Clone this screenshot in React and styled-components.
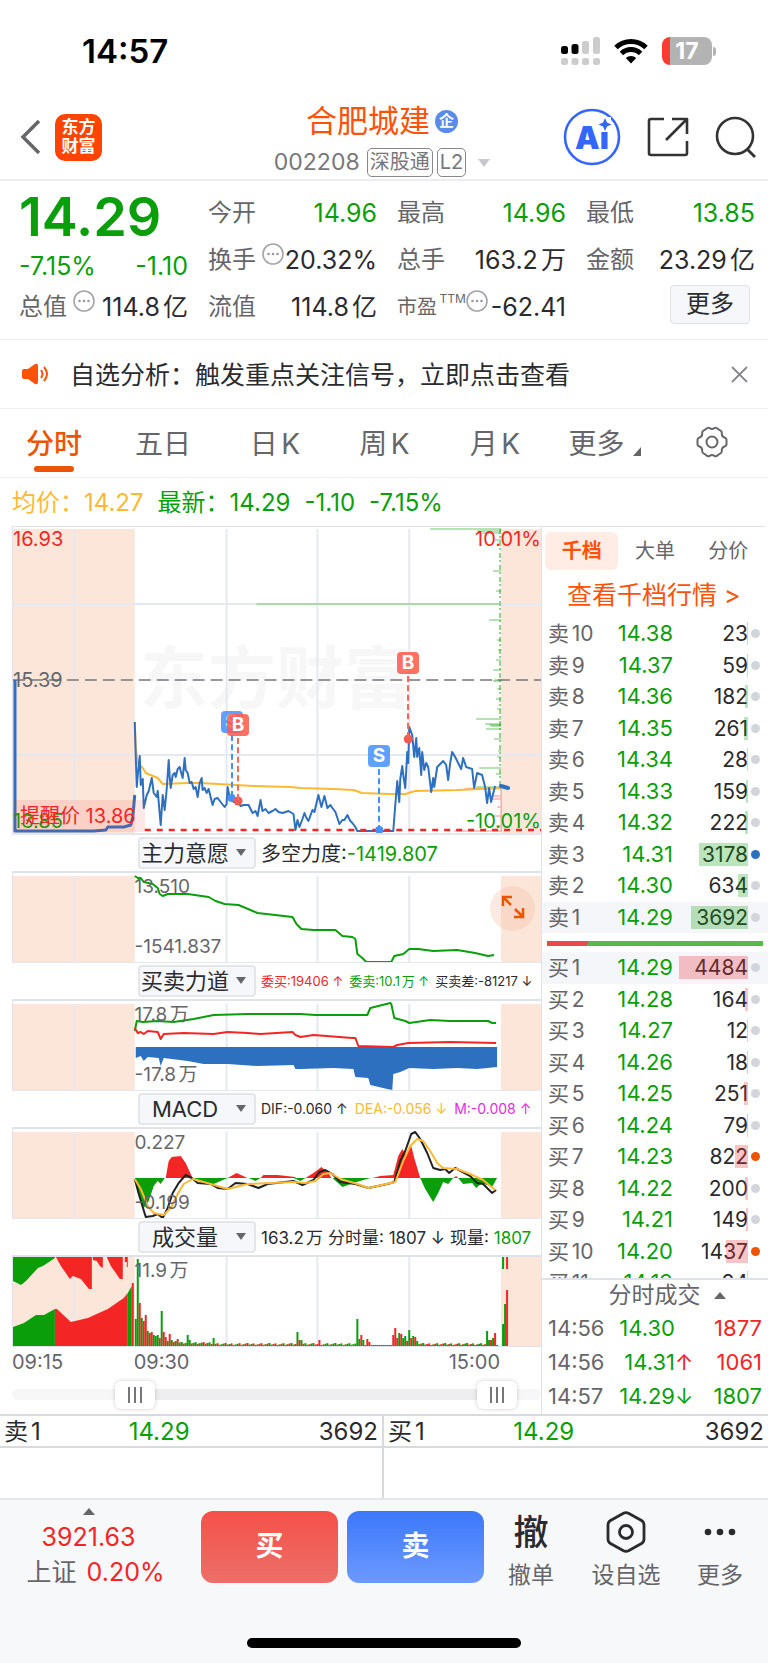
import React from 'react';
import {useState} from 'react';
import styled, {createGlobalStyle, css} from 'styled-components';

const GREEN = '#0a9f0a';
const RED = '#f42525';
const BLUE = '#2e70c0';
const GOLD = '#fdb933';
const ORANGE = '#ff5208';

const GlobalStyle = createGlobalStyle`
    * {
        box-sizing: border-box;
    }
    body {
        margin: 0;
        background: #fff;
        color: #2b2b2f;
        font-family: Inter, "Noto Sans CJK SC", sans-serif;
        text-autospace: normal;
    }
    button, select, input {
        font-family: inherit;
        color: inherit;
        margin: 0;
        padding: 0;
        border: none;
        background: transparent;
    }
    button {
        cursor: pointer;
    }
`;

const colors = {green: GREEN, red: RED, gold: GOLD, gray: '#66666a', magenta: '#e52be5', dark: '#2b2b2f'};

const Tint = styled.span`
    color: ${p => colors[p.$color]};
`;

const StatusBar = styled.div`
    display: flex;
    align-items: center;
    justify-content: space-between;
    height: 102px;
    padding: 0 52px 0 82px;
    color: #000;
`;

const Clock = styled.div`
    font-size: 33px;
    font-weight: 600;
`;

const StatusIcons = styled.div`
    display: flex;
    align-items: center;
    gap: 14px;
`;

const Battery = styled.div`
    display: flex;
    align-items: center;
    justify-content: center;
    width: 50px;
    height: 28px;
    border-radius: 8px;
    background: linear-gradient(90deg, #ff3b30 8px, #b3b3b3 8px);
    color: #fff;
    font-size: 23px;
    font-weight: 700;
`;

const BatteryWrap = styled.div`
    display: flex;
    align-items: center;
    gap: 1px;
`;

const BatteryTip = styled.div`
    width: 3px;
    height: 9px;
    border-radius: 0 3px 3px 0;
    background: #b3b3b3;
`;

const Header = styled.header`
    display: grid;
    grid-template-columns: 1fr auto 1fr;
    align-items: center;
    height: 79px;
    padding: 0 11px 0 20px;
    border-bottom: 2px solid #ececee;
`;

const HeaderLeft = styled.div`
    display: flex;
    align-items: center;
    gap: 14px;
    padding-bottom: 10px;
`;

const HeaderRight = styled.div`
    display: flex;
    align-items: center;
    justify-content: flex-end;
    gap: 26px;
    padding-bottom: 10px;
`;

const IconButton = styled.button`
    display: flex;
    align-items: center;
`;

const Logo = styled.div`
    width: 47px;
    height: 47px;
    padding-top: 4px;
    border-radius: 10px;
    background: #ff4400;
    color: #fff;
    font-size: 17px;
    font-weight: 700;
    line-height: 19px;
    text-align: center;
`;

const TitleBlock = styled.div`
    display: flex;
    flex-direction: column;
    align-items: center;
    gap: 8px;
    padding: 0 13px 5px 0;
`;

const Title = styled.div`
    display: flex;
    align-items: center;
    gap: 5px;
    color: ${ORANGE};
    font-size: 31px;
    line-height: 38px;
`;

const CompanyBadge = styled.span`
    width: 23px;
    height: 23px;
    border-radius: 50%;
    background: #5b8bea;
    color: #fff;
    font-size: 15px;
    font-weight: 700;
    line-height: 22px;
    text-align: center;
`;

const CodeLine = styled.div`
    display: flex;
    align-items: center;
    gap: 4px;
    color: #77777b;
    font-size: 23px;
    line-height: 29px;
`;

const CodeNumber = styled.span`
    margin-right: 3px;
`;

const CodeTag = styled.span`
    padding: 0 2px;
    border: 1px solid #88888c;
    border-radius: 5px;
    font-size: 20px;
    line-height: 27px;
`;

const Triangle = styled.span`
    display: inline-block;
    border: ${p => p.$size || 6}px solid transparent;
    border-top: ${p => p.$up ? 0 : (p.$size || 6) + 2}px solid ${p => p.$color || '#66666a'};
    border-bottom: ${p => p.$up ? (p.$size || 6) + 1 : 0}px solid ${p => p.$color || '#66666a'};
`;

const CodeArrow = styled(Triangle)`
    margin-left: 8px;
`;

const Quote = styled.section`
    display: grid;
    grid-template-columns: repeat(4, minmax(0, 1fr));
    grid-template-rows: repeat(3, 47px);
    column-gap: 20px;
    height: 159px;
    padding: 8px 13px 0 19px;
    border-bottom: 1px solid #f0f0f2;
    font-size: 25px;
`;

const PriceCell = styled.div`
    grid-row: span 2;
    display: flex;
    flex-direction: column;
    color: ${GREEN};
`;

const BigPrice = styled.div`
    font-size: 54px;
    font-weight: 600;
    line-height: 55px;
`;

const ChangeLine = styled.div`
    display: flex;
    justify-content: space-between;
    line-height: 45px;
`;

const QuoteCell = styled.div`
    display: flex;
    align-items: center;
    white-space: nowrap;
    line-height: 30px;
`;

const QuoteLabel = styled.span`
    color: #66666a;
    font-size: ${p => p.$small ? 20 : 24}px;
    sup {
        font-size: 12px;
        line-height: 12px;
        vertical-align: 11px;
    }
`;

const QuoteValue = styled.span`
    margin-left: auto;
    color: ${p => p.$green ? GREEN : '#2b2b2f'};
`;

const InfoDots = styled.button`
    display: flex;
    align-self: flex-start;
    margin: 7px 0 0 ${p => p.$tight ? 0 : 6}px;
`;

const MoreButton = styled.button`
    align-self: center;
    justify-self: end;
    width: 80px;
    height: 39px;
    margin: 0 5px 4px 0;
    padding-bottom: 1px;
    border: 1px solid #dfe1e6;
    border-radius: 4px;
    background: #f5f7fa;
    font-size: 24px;
    line-height: 30px;
`;

const Notice = styled.section`
    display: flex;
    align-items: center;
    gap: 20px;
    height: 69px;
    padding: 0 20px 0 22px;
    border-bottom: 1px solid #f0f0f2;
    font-size: 25px;
`;

const NoticeText = styled.div`
    flex: 1;
    padding-bottom: 3px;
    white-space: nowrap;
`;

const Periods = styled.nav`
    display: grid;
    grid-template-columns: 108fr 110fr 114fr 105fr 116fr 103fr 112fr;
    height: 69px;
    border-bottom: 1px solid #f0f0f2;
`;

const Period = styled.button`
    position: relative;
    display: flex;
    align-items: center;
    justify-content: center;
    gap: 8px;
    padding-bottom: 3px;
    font-size: 28px;
    font-weight: ${p => p.$active ? 500 : 400};
    color: ${p => p.$active ? '#ec5404' : '#66666a'};
    ${p => p.$active && css`
        &::after {
            content: '';
            position: absolute;
            bottom: 5px;
            width: 40px;
            height: 6px;
            border-radius: 3px;
            background: #ec5404;
        }
    `}
`;

const Corner = styled.span`
    align-self: flex-end;
    margin-bottom: 18px;
    border-left: 8px solid transparent;
    border-bottom: 9px solid #66666a;
`;

const Legend = styled.div`
    display: flex;
    align-items: baseline;
    gap: 14px;
    height: 48px;
    padding-left: 12px;
    font-size: 24px;
    line-height: 49px;
    color: ${GREEN};
`;

const Main = styled.main`
    display: grid;
    grid-template-columns: minmax(0, 1fr) 227px;
    border-bottom: 2px solid #d8dae0;
`;

const Charts = styled.section`
    padding-left: 12px;
`;

const Plot = styled.div`
    position: relative;
    height: ${p => p.$height}px;
    border-left: 1px solid #dfe2ea;
    border-top: ${p => p.$thick ? 2 : 1}px solid #dfe2ea;
    svg.plot {
        position: absolute;
        inset: 0;
        display: block;
        width: 100%;
        height: 100%;
    }
`;

const PlotLabel = styled.span`
    position: absolute;
    left: ${p => p.$right ? 'auto' : p.$inset ? '23%' : '0'};
    right: ${p => p.$right ? '0' : 'auto'};
    top: ${p => p.$top}px;
    color: ${p => colors[p.$color || 'gray']};
    font-size: ${p => p.$size || 19}px;
    line-height: 24px;
    white-space: nowrap;
`;

const Watermark = styled.div`
    position: absolute;
    top: 101px;
    left: 127px;
    color: #f7f7f8;
    font-size: 68px;
    font-weight: 700;
    line-height: 100px;
`;

const Alert = styled.div`
    position: absolute;
    left: 0;
    top: 273px;
    width: 132px;
    height: 32px;
    padding-left: 7px;
    background: rgba(244, 60, 60, 0.12);
    color: ${RED};
    font-size: 20px;
    line-height: 32px;
    white-space: nowrap;
`;

const Pin = styled.div`
    position: absolute;
    left: ${p => p.$x}%;
    top: ${p => p.$y}px;
    width: 22px;
    height: 22px;
    margin-left: -11px;
    border-radius: 4px;
    background: ${p => p.$buy ? 'rgba(255, 90, 75, 0.86)' : 'rgba(70, 145, 255, 0.86)'};
    color: #fff;
    font-size: 19px;
    font-weight: 700;
    line-height: 22px;
    text-align: center;
    &::after {
        content: '';
        position: absolute;
        left: 10px;
        top: 24px;
        height: ${p => p.$drop}px;
        border-left: 2px dashed ${p => p.$buy ? '#f8695c' : '#4690fa'};
    }
`;

const ExpandButton = styled.button`
    position: absolute;
    right: 6px;
    top: 13px;
    width: 45px;
    height: 45px;
    border-radius: 50%;
    background: rgba(246, 180, 150, 0.28);
`;

const Indicator = styled.div`
    display: flex;
    align-items: center;
    gap: 5px;
    height: ${p => p.$height}px;
    padding-left: 126px;
    border-top: ${p => p.$first ? 2 : 1}px solid #e4e7ee;
`;

const Picker = styled.label`
    position: relative;
    flex: none;
    width: 118px;
    select {
        appearance: none;
        display: block;
        width: 100%;
        height: 32px;
        padding: 0 24px 1px 0;
        border: 2px solid #e4e6ea;
        border-radius: 4px;
        background: #f5f7fa;
        font-size: 22px;
        text-align: center;
        text-align-last: center;
        text-overflow: clip;
    }
    span {
        position: absolute;
        right: 10px;
        top: 12px;
        pointer-events: none;
    }
`;

const Readout = styled.div`
    display: flex;
    align-items: baseline;
    gap: ${p => p.$gap || 0}px;
    padding-bottom: 1px;
    font-size: ${p => p.$size}px;
    white-space: nowrap;
`;

const Axis = styled.div`
    display: flex;
    height: 33px;
    border-top: 1px solid #dfe2ea;
    color: #66666a;
    font-size: 20px;
    line-height: 30px;
    span:nth-child(1) {
        width: 23%;
    }
    span:nth-child(3) {
        margin-left: auto;
        padding-right: 41px;
    }
`;

const RangeBar = styled.div`
    position: relative;
    height: 35px;
    &::before {
        content: '';
        position: absolute;
        inset: 10px 0 14px;
        border-radius: 6px;
        background: linear-gradient(90deg, #f7f7f8 22%, #eeeef0 22%, #eeeef0 94%, #f7f7f8 94%);
    }
    input {
        appearance: none;
        position: absolute;
        left: 0;
        top: 0;
        width: 100%;
        height: 31px;
        pointer-events: none;
    }
    input::-webkit-slider-thumb {
        appearance: none;
        pointer-events: auto;
        width: 40px;
        height: 28px;
        border-radius: 6px;
        box-shadow: 0 0 4px rgba(0, 0, 0, 0.2);
        background:
            linear-gradient(#77777b, #77777b) 13px 6px / 2px 16px no-repeat,
            linear-gradient(#77777b, #77777b) 19px 6px / 2px 16px no-repeat,
            linear-gradient(#77777b, #77777b) 25px 6px / 2px 16px no-repeat,
            #fff;
    }
`;

const Book = styled.aside`
    display: flex;
    flex-direction: column;
    height: 888px;
    border-left: 1px solid #dfe2ea;
`;

const BookTabs = styled.div`
    display: grid;
    grid-template-columns: repeat(3, 1fr);
    height: 44px;
    margin-right: 3px;
    padding: 5px 0 0 3px;
    border-top: 1px solid #dfe2ea;
`;

const BookTab = styled.button`
    padding-bottom: 4px;
    border-radius: 6px;
    font-size: 20px;
    font-weight: ${p => p.$active ? 700 : 400};
    background: ${p => p.$active ? '#ffede5' : 'transparent'};
    color: ${p => p.$active ? ORANGE : '#66666a'};
`;

const BookLink = styled.a`
    display: block;
    padding: 3px 0 0 25px;
    color: ${ORANGE};
    font-size: 25px;
    line-height: 45px;
    white-space: nowrap;
    text-decoration: none;
`;

const Levels = styled.div`
    display: grid;
    grid-template-rows: repeat(10, 1fr);
    height: 315px;
`;

const BuyLevels = styled.div`
    flex: 1;
    overflow: hidden;
`;

const Level = styled.div`
    display: grid;
    grid-template-columns: 52px 73px 75px 1fr;
    align-items: center;
    padding-left: 6px;
    font-size: 21px;
    line-height: 31px;
    background: ${p => p.$active ? '#f5f6f9' : 'transparent'};
`;

const LevelName = styled.span`
    color: #66666a;
    white-space: nowrap;
`;

const LevelPrice = styled.span`
    color: ${GREEN};
    font-size: 22px;
    text-align: right;
`;

const LevelVolume = styled.span`
    position: relative;
    text-align: right;
    i {
        position: absolute;
        right: 0;
        top: 4px;
        height: 23px;
        background: ${p => p.$sell ? 'rgba(10, 159, 10, 0.27)' : 'rgba(233, 50, 60, 0.29)'};
    }
`;

const Dot = styled.span`
    width: 9px;
    height: 9px;
    margin-left: 3px;
    border-radius: 50%;
    background: ${p => p.$color || '#d2d5dc'};
`;

const Ratio = styled.div`
    height: 5px;
    margin: 8px 5px 6px;
    background: linear-gradient(120deg, #ea4a4a 36px, #57b947 37px);
`;

const Trades = styled.div`
    height: 136px;
    border-top: 2px solid #dfe2ea;
    color: #66666a;
`;

const TradesTitle = styled.button`
    display: flex;
    align-items: center;
    justify-content: center;
    gap: 13px;
    width: 100%;
    height: 31px;
    padding: 0 0 1px 24px;
    color: #66666a;
    font-size: 23px;
    line-height: 28px;
`;

const Trade = styled.div`
    display: grid;
    grid-template-columns: 59px 68px 17px 1fr;
    padding: 0 6px;
    font-size: 22px;
    line-height: 34px;
    text-align: right;
    span:first-child {
        text-align: left;
    }
`;

const Depth = styled.section`
    display: grid;
    grid-template-columns: 1fr 1fr;
    border-bottom: 2px solid #e6e7ea;
`;

const DepthSide = styled.div`
    height: 82px;
    &:first-child {
        border-right: 2px solid #d8dae0;
    }
`;

const DepthRow = styled.div`
    display: grid;
    grid-template-columns: 1fr 1fr 1fr;
    height: 32px;
    padding: 0 4px;
    border-bottom: 2px solid #d8dae0;
    font-size: 24px;
    line-height: 32px;
    span:nth-child(2) {
        color: ${GREEN};
    }
    span:nth-child(3) {
        text-align: right;
    }
`;

const Footer = styled.footer`
    background: #f7f8fa;
    height: 165px;
    display: flex;
    flex-direction: column;
    justify-content: space-between;
    align-items: center;
`;

const Actions = styled.div`
    display: grid;
    grid-template-columns: 182px 1fr 1fr 76px 96px 74px;
    column-gap: 9px;
    width: 100%;
    padding: 11px 11px 0 10px;
`;

const IndexBox = styled.div`
    display: flex;
    flex-direction: column;
    align-items: center;
    padding-right: 25px;
    color: ${RED};
    font-size: 25px;
    line-height: 35px;
    white-space: nowrap;
    ${Triangle} {
        margin: -3px 0 5px;
    }
`;

const IndexChange = styled.div`
    display: flex;
    align-items: baseline;
    gap: 10px;
    padding-left: 14px;
`;

const OrderButton = styled.button`
    height: 72px;
    border-radius: 12px;
    background: ${p => p.$buy ? 'linear-gradient(#f55149, #ec6f69)' : 'linear-gradient(#3c78fb, #6c99fd)'};
    color: #fff;
    font-size: 28px;
    font-weight: 700;
    line-height: 34px;
    padding-bottom: 3px;
`;

const Tool = styled.button`
    display: flex;
    flex-direction: column;
    align-items: center;
    justify-content: space-between;
    height: 79px;
    color: #66666a;
    font-size: 23px;
    line-height: 30px;
    white-space: nowrap;
`;

const ToolGlyph = styled.span`
    color: #2b2b2f;
    font-size: 35px;
    font-weight: 500;
    line-height: 40px;
    height: 42px;
    display: flex;
    align-items: center;
`;

const HomeBar = styled.div`
    width: 274px;
    height: 10px;
    margin-bottom: 17px;
    border-radius: 5px;
    background: #000;
`;

const price = '122,195 123,230 124,260 125,248 127,229 128,258 130,252 131,281 134,268 136,264 139,251 141,266 144,270 145,264 148,298 150,268 152,283 154,262 156,233 157,250 158,261 160,248 162,246 163,250 165,242 167,240 168,244 170,251 172,231 173,243 175,246 177,256 179,255 181,262 183,260 185,270 187,256 189,251 190,263 192,261 194,266 196,262 198,270 200,278 202,272 205,271 208,275 212,280 214,277 215,260 217,270 218,271 221,275 225,274 228,279 231,278 236,278 240,286 243,284 245,289 248,273 250,284 253,282 256,286 260,284 263,282 266,285 270,286 276,284 281,287 283,303 285,293 287,300 290,292 292,286 294,291 296,294 300,283 302,285 306,268 309,280 312,269 315,281 318,278 320,281 323,285 327,297 330,293 332,293 335,288 338,294 340,296 343,300 345,304 381,304 383,278 385,254 387,275 388,252 390,239 391,248 393,261 395,225 396,236 397,200 400,208 402,230 404,211 405,230 407,221 409,248 410,225 412,243 414,236 416,240 419,265 421,251 422,260 425,240 428,237 431,234 434,238 436,253 438,236 440,225 443,230 446,236 449,242 451,231 454,240 460,242 462,261 465,246 470,248 473,260 475,276 477,261 479,275 483,259';
const opening = '2,153 2,304 81,304 93,303 95,300 111,300 118,298 120,290 122,268';
const average = '122,195 123,221 125,236 130,241 133,246 145,251 150,257 175,256 188,256 241,259 278,260 288,261 321,262 341,263 350,266 378,267 393,267 403,264 445,263 488,261';
const willing = '122,3 125,5 128,5 131,9 140,11 145,15 147,21 150,23 155,21 175,21 196,24 203,28 212,31 226,32 245,40 280,44 284,51 289,56 301,57 323,57 330,63 340,64 343,66 345,81 350,85 354,89 379,89 382,83 391,81 397,76 406,76 421,78 445,77 463,80 476,83 482,82';
const askForce = '122,30 124,20 130,21 145,20 161,21 181,18 201,14 235,13 288,13 303,14 348,14 355,14 358,7 378,2 379,3 382,17 393,20 397,22 418,19 438,20 465,20 476,20 480,22 484,22';
const bidForce = '122,27 125,32 128,31 131,33 135,30 145,31 148,38 151,33 171,32 201,33 215,31 235,32 248,33 280,31 283,34 288,36 301,34 340,37 343,37 346,45 381,46 385,44 396,42 438,41 484,42';
const forceGap = '123,46 123,57 128,55 131,60 135,56 146,57 148,65 151,57 175,60 191,63 215,63 245,65 281,64 283,68 288,68 321,67 341,68 343,76 356,77 358,84 375,88 380,89 381,73 388,71 397,67 421,68 445,67 465,68 485,66 485,46';
const dif = '122,50 126,65 133,88 140,87 145,85 150,89 155,79 160,64 166,54 173,46 179,49 185,54 198,55 205,59 215,60 223,54 235,55 246,59 255,55 281,52 290,56 301,51 307,43 313,41 320,45 328,53 343,55 356,59 375,55 382,53 388,32 393,22 399,5 403,3 408,10 415,24 421,39 428,41 433,40 437,44 443,39 458,47 465,54 471,55 480,64 484,61';
const dea = '122,50 128,60 135,77 141,84 151,86 158,79 165,65 171,55 180,50 191,53 215,60 235,55 281,53 293,54 303,52 311,45 318,44 328,50 345,55 356,59 383,53 391,32 398,17 405,10 411,12 418,22 425,34 431,39 445,40 458,45 471,51 483,61';
const macdGreen = [
    '122,49 125,64 131,79 136,72 141,57 145,52 148,55 152,49',
    '181,49 188,52 201,55 215,49',
    '236,49 243,52 248,49',
    '281,49 288,52 293,49',
    '320,49 330,58 341,54 358,49',
    '408,49 413,60 421,73 426,64 431,53 436,55 441,49',
    '446,49 451,55 460,54 464,59 470,54 480,58 485,49'
];
const macdRed = [
    '153,49 156,32 159,28 168,27 173,34 179,47 180,49',
    '215,49 224,44 235,49',
    '248,49 251,46 265,46 283,48 283,49',
    '293,49 301,44 309,38 316,44 319,49',
    '360,49 368,47 381,46 386,27 390,20 393,25 399,17 402,29 408,49',
    '441,49 444,47 446,49'
];

// [x, height, colour] for the minutes that stand out, everything else is filler
const volumePeaks = [
    [122, 27, GREEN], [124, 87, GREEN], [126, 43, RED], [128, 28, GREEN], [130, 25, RED], [132, 31, RED],
    [134, 15, GREEN], [136, 13, RED], [138, 14, RED], [140, 11, GREEN], [142, 10, GREEN], [144, 11, GREEN],
    [146, 8, RED], [148, 35, GREEN], [150, 14, RED], [152, 9, RED], [154, 5, GREEN], [156, 12, RED],
    [158, 6, GREEN], [160, 4, RED], [162, 5, GREEN], [164, 7, RED], [174, 11, GREEN], [176, 6, GREEN],
    [200, 8, GREEN], [284, 14, GREEN], [286, 6, RED], [288, 6, GREEN], [306, 6, RED], [344, 27, GREEN],
    [346, 7, GREEN], [348, 11, RED], [350, 6, GREEN], [354, 7, RED], [356, 4, RED], [380, 11, RED],
    [382, 18, RED], [384, 8, RED], [386, 13, GREEN], [388, 12, RED], [390, 8, GREEN], [392, 10, GREEN],
    [394, 5, RED], [396, 16, GREEN], [398, 8, RED], [400, 10, GREEN], [402, 9, RED], [404, 5, GREEN],
    [474, 15, GREEN], [476, 6, GREEN], [478, 6, RED], [480, 8, GREEN], [482, 13, RED],
    [490, 22, GREEN], [492, 42, GREEN], [494, 56, RED]
];

const volumeBars = () => {
    const bars = [...volumePeaks];
    const taken = volumePeaks.map(b => b[0]);
    for (let x = 166; x < 486; x += 2) {
        if (taken.includes(x)) continue;
        const quiet = x > 356 && x < 380;
        const h = quiet ? 1 : 1 + (x * 7 % 11) / 5;
        bars.push([x, x < 200 ? h + 1 : h, x * 13 % 7 < 4 ? GREEN : RED]);
    }
    return bars;
};

// [y, length] of the price distribution bars on the right edge
const chips = [
    [2, 71], [4, 24], [6, 19], [13, 6], [44, 8], [64, 5], [93, 12], [113, 4], [123, 3], [133, 5], [143, 8],
    [153, 7], [154, 8], [162, 4], [172, 5], [182, 4], [192, 25], [197, 16], [198, 12], [199, 10], [202, 15], [212, 7],
    [224, 3], [230, 4], [241, 22], [247, 5], [260, 25]
];

const sells = [
    ['10', '14.38', 23], ['9', '14.37', 59], ['8', '14.36', 182], ['7', '14.35', 261], ['6', '14.34', 28],
    ['5', '14.33', 159], ['4', '14.32', 222], ['3', '14.31', 3178, BLUE], ['2', '14.30', 634], ['1', '14.29', 3692]
];

const buys = [
    ['1', '14.29', 4484], ['2', '14.28', 164], ['3', '14.27', 12], ['4', '14.26', 18], ['5', '14.25', 251],
    ['6', '14.24', 79], ['7', '14.23', 822, '#ec5404'], ['8', '14.22', 200], ['9', '14.21', 149],
    ['10', '14.20', 1437, '#ec5404']
];

const InfoIcon = ({tight}) => (
    <InfoDots aria-label="说明" $tight={tight}>
        <svg width="22" height="22" viewBox="0 0 22 22">
            <circle cx="11" cy="11" r="10" fill="none" stroke="#a5a5a9" strokeWidth="1.6"/>
            <circle cx="6.5" cy="11" r="1.3" fill="#99999d"/>
            <circle cx="11" cy="11" r="1.3" fill="#99999d"/>
            <circle cx="15.5" cy="11" r="1.3" fill="#99999d"/>
        </svg>
    </InfoDots>
);

const Grid = ({height, top = 3, children}) => (
    <svg className="plot" viewBox={`0 0 529 ${height}`} preserveAspectRatio="none">
        <rect x="0" y={top} width="122" height={height - top} fill="#fce6da"/>
        <rect x="489" y={top} width="40" height={height - top} fill="#fce6da"/>
        {[61, 214, 305, 397].map(x => (
            <line key={x} x1={x} x2={x} y1={top} y2={height} stroke="#e6e9f0" strokeWidth="2"/>
        ))}
        {children}
    </svg>
);

const Line = ({points, color, width = 2}) => (
    <polyline points={points} fill="none" stroke={color} strokeWidth={width} strokeLinejoin="round"/>
);

const BookLevel = ({side, level, active}) => {
    const [n, cost, volume, dot] = level;
    return <Level $active={active}>
        <LevelName>{side}{n}</LevelName>
        <LevelPrice>{cost}</LevelPrice>
        <LevelVolume $sell={side === '卖'}>
            {volume}
            <i style={{width: Math.max(1, Math.round(volume / 65))}}/>
        </LevelVolume>
        <Dot $color={dot}/>
    </Level>;
};

const IndicatorBar = ({name, options, first, height = 38, children}) => {
    const [value, setValue] = useState(name);
    return <Indicator $first={first} $height={height}>
        <Picker>
            <select aria-label="指标" value={value} onChange={e => setValue(e.target.value)}>
                {options.map(o => <option key={o}>{o}</option>)}
            </select>
            <Triangle $size={5}/>
        </Picker>
        {children}
    </Indicator>;
};

const indicators = ['主力意愿', '买卖力道', 'MACD', '成交量'];

export default function App() {

    const [period, setPeriod] = useState('分时');
    const [bookTab, setBookTab] = useState('千档');
    const [range, setRange] = useState([211, 951]);

    return <>
        <GlobalStyle/>

        <StatusBar>
            <Clock>14:57</Clock>
            <StatusIcons>
                <svg width="39" height="28" viewBox="0 0 39 28">
                    <rect x="0" y="9" width="7" height="8" rx="2.5" fill="#000"/>
                    <rect x="10.5" y="7" width="7" height="10" rx="2.5" fill="#000"/>
                    <rect x="21" y="4" width="7" height="13" rx="2.5" fill="#ccc"/>
                    <rect x="32" y="0" width="7" height="17" rx="2.5" fill="#ccc"/>
                    {[0, 10.5, 21, 32].map(x => <rect key={x} x={x} y="21" width="7" height="7" rx="2.5" fill="#ccc"/>)}
                </svg>
                <svg width="34" height="26" viewBox="0 0 34 26">
                    <g fill="none" stroke="#000" strokeWidth="5">
                        <path d="M2 9.5a21.5 21.5 0 0 1 30 0"/>
                        <path d="M7.5 15.5a13.5 13.5 0 0 1 19 0"/>
                    </g>
                    <path d="M11.8 20a7.5 7.5 0 0 1 10.4 0L17 25.5z"/>
                </svg>
                <BatteryWrap>
                    <Battery>17</Battery>
                    <BatteryTip/>
                </BatteryWrap>
            </StatusIcons>
        </StatusBar>

        <Header>
            <HeaderLeft>
                <IconButton aria-label="返回">
                    <svg width="21" height="36" viewBox="0 0 21 36">
                        <path d="M19 2L3 18l16 16" fill="none" stroke="#66666a" strokeWidth="3.5"/>
                    </svg>
                </IconButton>
                <Logo>东方<br/>财富</Logo>
            </HeaderLeft>
            <TitleBlock>
                <Title>合肥城建<CompanyBadge>企</CompanyBadge></Title>
                <CodeLine>
                    <CodeNumber>002208</CodeNumber>
                    <CodeTag>深股通</CodeTag>
                    <CodeTag>L2</CodeTag>
                    <CodeArrow $size={6} $color="#c8c8cc"/>
                </CodeLine>
            </TitleBlock>
            <HeaderRight>
                <IconButton aria-label="Ai">
                    <svg width="58" height="58" viewBox="0 0 58 58">
                        <circle cx="29" cy="29" r="27" fill="none" stroke="#3566fb" strokeWidth="2.6"/>
                        <text x="12" y="41" fill="#3566fb" fontSize="31" fontWeight="900">Ai</text>
                        <path d="M36 9h12v13H36z" fill="#fff"/>
                        <path d="M42 10l2 4.500 4.500 2-4.500 2-2 4.500-2-4.500-4.500-2 4.500-2z" fill="#3566fb"/>
                    </svg>
                </IconButton>
                <IconButton aria-label="分享">
                    <svg width="42" height="42" viewBox="0 0 42 42">
                        <g fill="none" stroke="#333" strokeWidth="2.6" strokeLinejoin="round">
                            <path d="M17 3H4q-2 0-2 2v32q0 2 2 2h34q2 0 2-2V25"/>
                            <path d="M25 3h15v15M39 4L19 24"/>
                        </g>
                    </svg>
                </IconButton>
                <IconButton aria-label="搜索">
                    <svg width="42" height="42" viewBox="0 0 42 42">
                        <circle cx="20" cy="20" r="18" fill="none" stroke="#333" strokeWidth="2.6"/>
                        <path d="M32 33l8 8" stroke="#333" strokeWidth="2.8"/>
                    </svg>
                </IconButton>
            </HeaderRight>
        </Header>

        <Quote>
            <PriceCell>
                <BigPrice>14.29</BigPrice>
                <ChangeLine><span>-7.15%</span><span>-1.10</span></ChangeLine>
            </PriceCell>
            <QuoteCell><QuoteLabel>今开</QuoteLabel><QuoteValue $green>14.96</QuoteValue></QuoteCell>
            <QuoteCell><QuoteLabel>最高</QuoteLabel><QuoteValue $green>14.96</QuoteValue></QuoteCell>
            <QuoteCell><QuoteLabel>最低</QuoteLabel><QuoteValue $green>13.85</QuoteValue></QuoteCell>
            <QuoteCell><QuoteLabel>换手</QuoteLabel><InfoIcon/><QuoteValue>20.32%</QuoteValue></QuoteCell>
            <QuoteCell><QuoteLabel>总手</QuoteLabel><QuoteValue>163.2万</QuoteValue></QuoteCell>
            <QuoteCell><QuoteLabel>金额</QuoteLabel><QuoteValue>23.29亿</QuoteValue></QuoteCell>
            <QuoteCell><QuoteLabel>总值</QuoteLabel><InfoIcon/><QuoteValue>114.8亿</QuoteValue></QuoteCell>
            <QuoteCell><QuoteLabel>流值</QuoteLabel><QuoteValue>114.8亿</QuoteValue></QuoteCell>
            <QuoteCell>
                <QuoteLabel $small>市盈<sup>TTM</sup></QuoteLabel><InfoIcon tight/><QuoteValue>-62.41</QuoteValue>
            </QuoteCell>
            <MoreButton>更多</MoreButton>
        </Quote>

        <Notice>
            <svg width="28" height="22" viewBox="0 0 28 22">
                <path d="M0 8q0-2 2-2h4L13 1q3-1 3 2v16q0 3-3 2L6 16H2q-2 0-2-2z" fill="#ff5208"/>
                <path d="M19 7q3 4 0 8M22 4q6 7 0 14" fill="none" stroke="#ff5208" strokeWidth="2"/>
            </svg>
            <NoticeText>自选分析：触发重点关注信号，立即点击查看</NoticeText>
            <IconButton aria-label="关闭">
                <svg width="17" height="17" viewBox="0 0 17 17">
                    <path d="M1 1l15 15M16 1L1 16" stroke="#88888c" strokeWidth="1.8"/>
                </svg>
            </IconButton>
        </Notice>

        <Periods>
            {['分时', '五日', '日K', '周K', '月K', '更多'].map(name => (
                <Period key={name} $active={period === name} onClick={() => setPeriod(name)}>
                    {name}
                    {name === '更多' && <Corner/>}
                </Period>
            ))}
            <Period aria-label="设置">
                <svg width="32" height="32" viewBox="0 0 32 32" fill="none" stroke="#66666a" strokeWidth="2">
                    <path d="M10 3q2-2 3.500-1 2.500 2 5 0Q20 1 22 3l3 2q1 .8.8 2.500-.3 3 2.700 4 2 .6 2 2v5q0 1.400-2 2-3 1-2.700 4 .2 1.700-.8 2.500l-3 2q-2 2-3.500 1-2.500-2-5 0-1.500 1-3.500-1l-3-2q-1-.8-.8-2.500.3-3-2.700-4-2-.6-2-2v-5q0-1.400 2-2 3-1 2.700-4Q6 5.800 7 5z" strokeLinejoin="round"/>
                    <circle cx="16" cy="16" r="5.5"/>
                </svg>
            </Period>
        </Periods>

        <Legend>
            <Tint $color="gold">均价：14.27</Tint>
            <span>最新：14.29</span>
            <span>-1.10</span>
            <span>-7.15%</span>
        </Legend>

        <Main>
            <Charts>
                <Plot $height={307}>
                    <Watermark>东方财富</Watermark>
                    <Grid height={306} top={2}>
                        <path d="M0 77H529M0 228H529" stroke="#e6e9f0" strokeWidth="2"/>
                        <path d="M244 77H489" stroke="#a9dba9" strokeWidth="2"/>
                        <path d="M488 2V262" stroke="#8fd08f" strokeWidth="2" strokeDasharray="5 2 2 3"/>
                        {chips.map(([y, len]) => (
                            <path key={y} d={`M${489 - len} ${y}h${len}`} stroke="#0a9f0a" strokeOpacity="0.4" strokeWidth="1.5"/>
                        ))}
                        <path d="M453 261.500h36M481 269h8M478 272h11M485 280h4M481 289h8M484 299h5M442 304h47M489 262v43" stroke="#f42525" strokeOpacity="0.35" strokeWidth="1.5" fill="none"/>
                        <path d="M0 153H529" stroke="#77777b" strokeWidth="1.5" strokeDasharray="12 6"/>
                        <Line points={average} color={GOLD}/>
                        <Line points={opening} color={BLUE} width={3}/>
                        <Line points={price} color={BLUE}/>
                        <path d="M489 259l7 2" stroke={BLUE} strokeWidth="4" strokeLinecap="round"/>
                        <path d="M132 303H529" stroke={RED} strokeWidth="2.5" strokeDasharray="6 6"/>
                        <circle cx="219" cy="271" r="4" fill="#4690fa"/>
                        <circle cx="225.5" cy="274" r="4.5" fill="#ef5b50"/>
                        <circle cx="396" cy="212" r="4.5" fill="#ef5b50"/>
                        <circle cx="367" cy="303" r="4" fill="#4690fa"/>
                    </Grid>
                    <PlotLabel $top={0} $color="red" $size={20}>16.93</PlotLabel>
                    <PlotLabel $top={0} $color="red" $size={20} $right>10.01%</PlotLabel>
                    <PlotLabel $top={141} $size={20}>15.39</PlotLabel>
                    <PlotLabel $top={282} $color="green" $size={20}>13.85</PlotLabel>
                    <PlotLabel $top={282} $color="green" $size={20} $right>-10.01%</PlotLabel>
                    <Alert>提醒价 13.86</Alert>
                    <Pin $x={41.4} $y={184} $drop={62}>S</Pin>
                    <Pin $x={42.6} $y={187} $drop={62} $buy>B</Pin>
                    <Pin $x={69.3} $y={218} $drop={62}>S</Pin>
                    <Pin $x={74.8} $y={125} $drop={62} $buy>B</Pin>
                </Plot>

                <IndicatorBar name="主力意愿" options={indicators} first>
                    <Readout $size={20}><span>多空力度:<Tint $color="green">-1419.807</Tint></span></Readout>
                </IndicatorBar>
                <Plot $height={91} $thick>
                    <Grid height={89}>
                        <Line points={willing} color={GREEN}/>
                    </Grid>
                    <PlotLabel $top={2} $inset>13.510</PlotLabel>
                    <PlotLabel $top={62} $inset>-1541.837</PlotLabel>
                    <ExpandButton aria-label="展开">
                        <svg width="24" height="24" viewBox="0 0 24 24" fill="none" stroke="#ec5404" strokeWidth="2.5">
                            <path d="M11 2H2v9M2 2l8 8M13 22h9v-9M22 22l-8-8"/>
                        </svg>
                    </ExpandButton>
                </Plot>

                <IndicatorBar name="买卖力道" options={indicators} height={37}>
                    <Readout $size={13} $gap={6}>
                        <Tint $color="red">委买:19406 ↑</Tint>
                        <Tint $color="green">委卖:10.1万 ↑</Tint>
                        <span>买卖差:-81217 ↓</span>
                    </Readout>
                </IndicatorBar>
                <Plot $height={91} $thick>
                    <Grid height={89}>
                        <polygon points={forceGap} fill={BLUE}/>
                        <Line points={askForce} color={GREEN}/>
                        <Line points={bidForce} color={RED}/>
                    </Grid>
                    <PlotLabel $top={2} $inset>17.8万</PlotLabel>
                    <PlotLabel $top={62} $inset>-17.8万</PlotLabel>
                </Plot>

                <IndicatorBar name="MACD" options={indicators} height={37}>
                    <Readout $size={14} $gap={7}>
                        <span>DIF:-0.060 ↑</span>
                        <Tint $color="gold">DEA:-0.056 ↓</Tint>
                        <Tint $color="magenta">M:-0.008 ↑</Tint>
                    </Readout>
                </IndicatorBar>
                <Plot $height={91} $thick>
                    <Grid height={89}>
                        {macdGreen.map(p => <polygon key={p} points={p} fill={GREEN}/>)}
                        {macdRed.map(p => <polygon key={p} points={p} fill={RED}/>)}
                        <Line points={dif} color="#222"/>
                        <Line points={dea} color={GOLD}/>
                    </Grid>
                    <PlotLabel $top={2} $inset>0.227</PlotLabel>
                    <PlotLabel $top={62} $inset>-0.199</PlotLabel>
                </Plot>

                <IndicatorBar name="成交量" options={indicators} height={37}>
                    <Readout $size={17} $gap={5}>
                        <span>163.2万</span>
                        <span>分时量: 1807 ↓</span>
                        <span>现量: <Tint $color="green">1807</Tint></span>
                    </Readout>
                </IndicatorBar>
                <Plot $height={91} $thick>
                    <Grid height={89} top={0}>
                        <path d="M0 89V70L11 66 23 58H31L42 52V89zM0 0V24L8 28 13 24 25 11 30 9 42 1V0zM115 89V36L119 29V89z" fill={GREEN}/>
                        <path d="M42 89V52H44L58 65 75 61 95 52 111 41 115 36V89zM119 89V26H121V89z" fill={RED}/>
                        <path d="M43 0L48 9 57 22 60 19 68 22 76 32H79V0zM80 0V3L84 4 87 9 90 11V0zM94 0L98 9 103 16 107 22H110V0zM112 0V5H114V10H115V0z" fill={RED}/>
                        {volumeBars().map(([x, h, c]) => (
                            <rect key={x} x={x} y={89 - h} width="2" height={h} fill={c}/>
                        ))}
                        <rect x="490" y="0" width="2" height="12" fill={GREEN}/>
                        <rect x="494" y="0" width="2" height="12" fill={RED}/>
                    </Grid>
                    <PlotLabel $top={2} $inset>11.9万</PlotLabel>
                </Plot>

                <Axis><span>09:15</span><span>09:30</span><span>15:00</span></Axis>
                <RangeBar>
                    <input type="range" aria-label="开始时间" min="0" max="1000" value={range[0]}
                        onChange={e => setRange([Math.min(+e.target.value, range[1]), range[1]])}/>
                    <input type="range" aria-label="结束时间" min="0" max="1000" value={range[1]}
                        onChange={e => setRange([range[0], Math.max(+e.target.value, range[0])])}/>
                </RangeBar>
            </Charts>

            <Book>
                <BookTabs>
                    {['千档', '大单', '分价'].map(name => (
                        <BookTab key={name} $active={bookTab === name} onClick={() => setBookTab(name)}>{name}</BookTab>
                    ))}
                </BookTabs>
                <BookLink href="#book">查看千档行情 &gt;</BookLink>
                <Levels>
                    {sells.map(l => <BookLevel key={l[0]} side="卖" level={l} active={l[0] === '1'}/>)}
                </Levels>
                <Ratio/>
                <BuyLevels>
                    <Levels>
                        {buys.map(l => <BookLevel key={l[0]} side="买" level={l} active={l[0] === '1'}/>)}
                    </Levels>
                    <BookLevel side="买" level={['11', '14.19', 84]}/>
                </BuyLevels>
                <Trades>
                    <TradesTitle>分时成交<Triangle $up/></TradesTitle>
                    <Trade>
                        <span>14:56</span><Tint $color="green">14.30</Tint><span/><Tint $color="red">1877</Tint>
                    </Trade>
                    <Trade>
                        <span>14:56</span><Tint $color="green">14.31</Tint><Tint $color="red">↑</Tint><Tint $color="red">1061</Tint>
                    </Trade>
                    <Trade>
                        <span>14:57</span><Tint $color="green">14.29</Tint><Tint $color="green">↓</Tint><Tint $color="green">1807</Tint>
                    </Trade>
                </Trades>
            </Book>
        </Main>

        <Depth>
            <DepthSide><DepthRow><span>卖1</span><span>14.29</span><span>3692</span></DepthRow></DepthSide>
            <DepthSide><DepthRow><span>买1</span><span>14.29</span><span>3692</span></DepthRow></DepthSide>
        </Depth>

        <Footer>
            <Actions>
                <IndexBox>
                    <Triangle $up/>
                    <span>3921.63</span>
                    <IndexChange><Tint $color="gray">上证</Tint><span>0.20%</span></IndexChange>
                </IndexBox>
                <OrderButton $buy>买</OrderButton>
                <OrderButton>卖</OrderButton>
                <Tool><ToolGlyph>撤</ToolGlyph>撤单</Tool>
                <Tool>
                    <ToolGlyph>
                        <svg width="40" height="42" viewBox="0 0 40 42" fill="none" stroke="#2b2b2f" strokeWidth="2.8">
                            <path d="M17.5 2.300q2.500-1.300 5 0l13 7.200q2.500 1.500 2.500 4.500v14q0 3-2.500 4.500l-13 7.200q-2.500 1.300-5 0l-13-7.200Q2 31 2 28V14q0-3 2.500-4.500z"/>
                            <circle cx="20" cy="21" r="6.5"/>
                        </svg>
                    </ToolGlyph>
                    设自选
                </Tool>
                <Tool>
                    <ToolGlyph>
                        <svg width="32" height="8" viewBox="0 0 32 8" fill="#2b2b2f">
                            <circle cx="4" cy="4" r="3.3"/>
                            <circle cx="16" cy="4" r="3.3"/>
                            <circle cx="28" cy="4" r="3.3"/>
                        </svg>
                    </ToolGlyph>
                    更多
                </Tool>
            </Actions>
            <HomeBar/>
        </Footer>
    </>;
}
